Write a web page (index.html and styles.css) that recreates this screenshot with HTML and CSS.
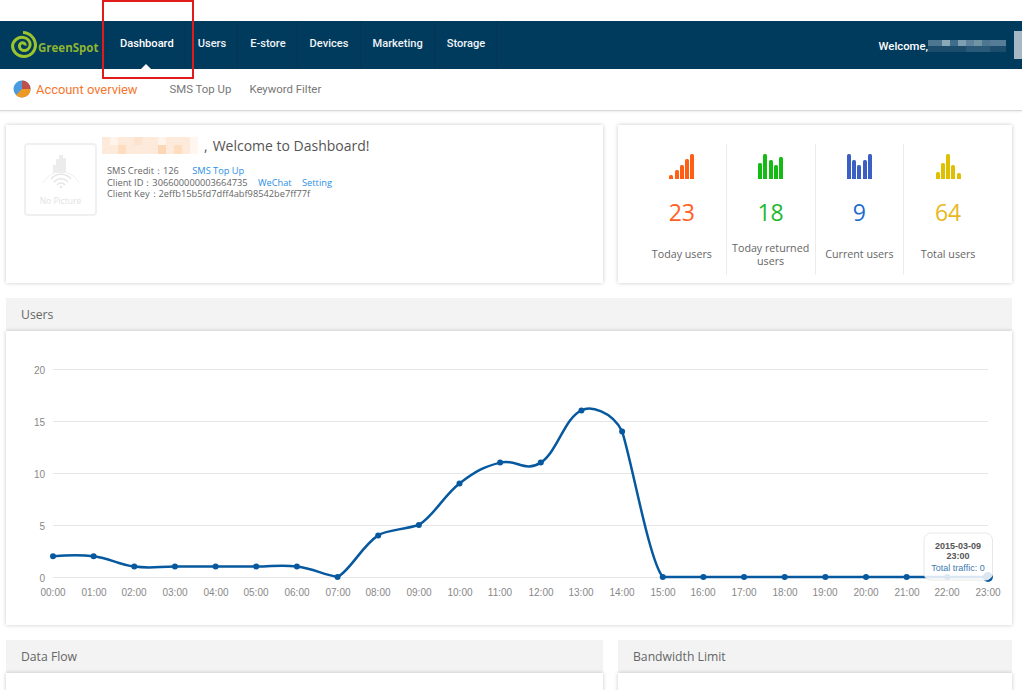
FILE: index.html
```html
<!DOCTYPE html>
<html lang="en">
<head>
    <meta charset="UTF-8">
    <meta name="viewport" content="width=device-width, initial-scale=1.0">
    <title>Dashboard</title>
    <link rel="stylesheet" href="styles.css">
</head>
<body>
    <div class="red-mark"></div>

    <header class="navbar">
        <a class="logo">
            <svg width="26" height="28" viewBox="0 0 26 28">
                <path d="M12 1.500A13 13 0 0 1 24.500 14.500A11.500 11.500 0 0 1 12.500 25.500A11 11 0 0 1 1.500 14.500A9.500 9.500 0 0 1 12.500 6.500A7 7 0 0 1 19 14.500A6 6 0 0 1 12.500 19.500A4.500 4.500 0 0 1 8.500 14.500A3 3 0 0 1 12.500 12A2 2 0 0 1 14 14.500" fill="none" stroke="#9cc42c" stroke-width="3"/>
            </svg>
            <span>GreenSpot</span>
        </a>
        <nav class="main-nav">
            <a class="active">Dashboard</a>
            <a>Users</a>
            <a>E-store</a>
            <a>Devices</a>
            <a>Marketing</a>
            <a>Storage</a>
        </nav>
        <div class="welcome">
            <span>Welcome,</span>
            <svg width="78" height="12" viewBox="0 0 78 12">
                <rect width="78" height="12" fill="#1d4d6d"/>
                <rect x="0" width="14" height="6" fill="#4d7691"/>
                <rect x="14" width="8" height="6" fill="#8aa9b8"/>
                <rect x="22" width="8" height="6" fill="#3f6c88"/>
                <rect x="30" width="8" height="6" fill="#7e9fb2"/>
                <rect x="38" width="8" height="6" fill="#5f839d"/>
                <rect x="46" width="8" height="6" fill="#6f95a5"/>
                <rect x="54" width="8" height="6" fill="#4d7691"/>
                <rect x="62" width="16" height="6" fill="#567c98"/>
                <rect x="38" y="6" width="24" height="6" fill="#2b5a78"/>
            </svg>
            <div class="welcome-edge"></div>
        </div>
    </header>

    <div class="subnav">
        <svg width="18" height="18" viewBox="0 0 18 18">
            <circle cx="9" cy="9" r="8.500" fill="#4b9be0"/>
            <path d="M9 9V.5A8.500 8.500 0 0 1 17.500 9z" fill="#c0504a"/>
            <path d="M9 9h8.500A8.500 8.500 0 0 1 3 15z" fill="#ee9a22"/>
        </svg>
        <a class="current">Account overview</a>
        <a class="sub-first">SMS Top Up</a>
        <a>Keyword Filter</a>
    </div>

    <main class="content">
        <section class="card account">
            <div class="no-picture">
                <svg width="40" height="34" viewBox="0 0 40 34">
                    <path d="M12 18V10h3V4h3V0h4v3h3v15z" fill="#ececec"/>
                    <path d="M2 28A20 20 0 0 1 38 28" fill="none" stroke="#f0f0f0"/>
                    <path d="M10 24A13 13 0 0 1 30 24M13 27A9 9 0 0 1 27 27M16 30A5 5 0 0 1 24 30" fill="none" stroke="#e6e6e6" stroke-width="1.500"/>
                    <circle cx="20" cy="32" r="1.200" fill="#e6e6e6"/>
                </svg>
                <span>No Picture</span>
            </div>
            <div class="account-info">
                <h2>
                    <svg width="96" height="17" viewBox="0 0 96 17">
                        <rect width="96" height="17" fill="#fdeadb"/>
                        <rect x="8" width="8" height="8" fill="#fff3ea"/>
                        <rect x="16" y="8" width="8" height="9" fill="#fddcc0"/>
                        <rect x="32" width="8" height="8" fill="#fde3cd"/>
                        <rect x="56" width="8" height="8" fill="#fff3ea"/>
                        <rect x="56" y="8" width="8" height="9" fill="#fdd6b5"/>
                        <rect x="72" y="8" width="8" height="9" fill="#fddcc0"/>
                        <rect x="88" width="8" height="17" fill="#fff6f0"/>
                    </svg>
                    <span class="comma">,</span>
                    <span>Welcome to Dashboard!</span>
                </h2>
                <p>SMS Credit：126 <a class="link-first">SMS Top Up</a></p>
                <p>Client ID：306600000003664735 <a class="link-next">WeChat</a> <a class="link-next">Setting</a></p>
                <p>Client Key：2effb15b5fd7dff4abf98542be7ff77f</p>
            </div>
        </section>

        <section class="card stats">
            <div class="stat stat-orange">
                <div class="bars">
                    <i class="bar-4"></i><i class="bar-9"></i><i class="bar-14"></i><i class="bar-20"></i><i class="bar-25"></i>
                </div>
                <div class="num">23</div>
                <div class="label">Today users</div>
            </div>
            <div class="stat stat-green">
                <div class="bars">
                    <i class="bar-16"></i><i class="bar-25"></i><i class="bar-19"></i><i class="bar-14"></i><i class="bar-22"></i>
                </div>
                <div class="num">18</div>
                <div class="label">Today returned users</div>
            </div>
            <div class="stat stat-blue">
                <div class="bars">
                    <i class="bar-25"></i><i class="bar-19"></i><i class="bar-14"></i><i class="bar-19"></i><i class="bar-25"></i>
                </div>
                <div class="num">9</div>
                <div class="label">Current users</div>
            </div>
            <div class="stat stat-yellow">
                <div class="bars">
                    <i class="bar-7"></i><i class="bar-16"></i><i class="bar-25"></i><i class="bar-14"></i><i class="bar-6"></i>
                </div>
                <div class="num">64</div>
                <div class="label">Total users</div>
            </div>
        </section>

        <section class="panel panel-wide">
            <div class="panel-head">Users</div>
            <div class="panel-body chart-body">
                <svg class="chart" width="1006" height="294" viewBox="6 331 1006 294">
                    <g class="grid">
                        <path d="M53 369.500H988M53 421.500H988M53 473.500H988M53 525.500H988"/>
                        <path class="base" d="M53 577.500H988"/>
                    </g>
                    <g class="y-labels">
                        <text x="45" y="374">20</text>
                        <text x="45" y="426">15</text>
                        <text x="45" y="478">10</text>
                        <text x="45" y="530">5</text>
                        <text x="45" y="582">0</text>
                    </g>
                    <g class="x-labels">
                        <text x="53" y="596">00:00</text>
                        <text x="94" y="596">01:00</text>
                        <text x="134" y="596">02:00</text>
                        <text x="175" y="596">03:00</text>
                        <text x="216" y="596">04:00</text>
                        <text x="256" y="596">05:00</text>
                        <text x="297" y="596">06:00</text>
                        <text x="338" y="596">07:00</text>
                        <text x="378" y="596">08:00</text>
                        <text x="419" y="596">09:00</text>
                        <text x="460" y="596">10:00</text>
                        <text x="500" y="596">11:00</text>
                        <text x="541" y="596">12:00</text>
                        <text x="581" y="596">13:00</text>
                        <text x="622" y="596">14:00</text>
                        <text x="663" y="596">15:00</text>
                        <text x="703" y="596">16:00</text>
                        <text x="744" y="596">17:00</text>
                        <text x="785" y="596">18:00</text>
                        <text x="825" y="596">19:00</text>
                        <text x="866" y="596">20:00</text>
                        <text x="907" y="596">21:00</text>
                        <text x="947" y="596">22:00</text>
                        <text x="988" y="596">23:00</text>
                    </g>
                    <path class="line" d="M53 556.200C53 556.200 77.390 554.120 93.650 556.200C109.910 558.280 118.040 564.520 134.300 566.600C150.560 568.680 158.690 566.600 174.950 566.600C191.210 566.600 199.340 566.600 215.600 566.600C231.860 566.600 239.990 566.600 256.250 566.600C272.510 566.600 280.640 564.520 296.900 566.600C313 568.700 322 574 337.550 577C350 570.760 362 545.800 378.200 535.400C386 530 402 530 418.850 525C435.110 514.600 443.240 495.880 459.500 483.400C475.760 470.920 483.890 466.760 500.150 462.600C516.410 458.440 524.540 473 540.800 462.600C557.060 452.200 565.190 416.840 581.450 410.600C590 405.500 612 411 622.100 431.400C632 462 649 560 662.750 577L988 577"/>
                    <g class="points">
                        <circle cx="53" cy="556.200" r="3"/><circle cx="93.650" cy="556.200" r="3"/>
                        <circle cx="134.300" cy="566.600" r="3"/><circle cx="174.950" cy="566.600" r="3"/>
                        <circle cx="215.600" cy="566.600" r="3"/><circle cx="256.250" cy="566.600" r="3"/>
                        <circle cx="296.900" cy="566.600" r="3"/><circle cx="337.550" cy="577" r="3"/>
                        <circle cx="378.200" cy="535.400" r="3"/><circle cx="418.850" cy="525" r="3"/>
                        <circle cx="459.500" cy="483.400" r="3"/><circle cx="500.150" cy="462.600" r="3"/>
                        <circle cx="540.800" cy="462.600" r="3"/><circle cx="581.450" cy="410.600" r="3"/>
                        <circle cx="622.100" cy="431.400" r="3"/><circle cx="662.750" cy="577" r="3"/>
                        <circle cx="703.400" cy="577" r="3"/><circle cx="744.050" cy="577" r="3"/>
                        <circle cx="784.700" cy="577" r="3"/><circle cx="825.350" cy="577" r="3"/>
                        <circle cx="866" cy="577" r="3"/><circle cx="906.650" cy="577" r="3"/>
                        <circle cx="947.300" cy="577" r="3"/><circle cx="987.950" cy="577" r="5"/>
                    </g>
                    <g class="tooltip">
                        <rect x="924" y="533" width="68.500" height="47" rx="7"/>
                        <text class="tip-date" x="958" y="549">2015-03-09</text>
                        <text class="tip-date" x="958" y="559">23:00</text>
                        <text class="tip-value" x="958" y="571">Total traffic: 0</text>
                    </g>
                </svg>
            </div>
        </section>

        <section class="panel">
            <div class="panel-head">Data Flow</div>
            <div class="panel-body cut-body"><span class="cut-text">8,000 MB</span></div>
        </section>
        <section class="panel">
            <div class="panel-head">Bandwidth Limit</div>
            <div class="panel-body cut-body"></div>
        </section>
    </main>
</body>
</html>
```

FILE: styles.css
```css
html, body {
    height: 690px;
    overflow: hidden;
}

body {
    font-family: "Open Sans", "Noto Sans", sans-serif;
    margin: 0;
    padding: 21px 0 0;
    box-sizing: border-box;
    background-color: #fff;
    color: #666;
    position: relative;
}

.red-mark {
    position: absolute;
    left: 102px;
    top: 0;
    width: 88px;
    height: 75px;
    border: 2px solid #e11a1a;
    z-index: 5;
}

.navbar {
    height: 48px;
    background-color: #003a5c;
    display: flex;
    align-items: center;
    font-family: Roboto, "Open Sans", sans-serif;
}

.logo {
    width: 107px;
    display: flex;
    align-items: center;
    padding-left: 11px;
    box-sizing: border-box;
    color: #8fb531;
    font-family: "Open Sans", sans-serif;
    font-size: 11.500px;
    font-weight: 700;
}

.logo span {
    margin: 4px 0 0 1px;
}

.main-nav {
    display: flex;
    height: 100%;
    border-left: 1px solid #043452;
}

.main-nav a {
    display: flex;
    align-items: center;
    padding: 0 11px 3px 12px;
    color: #eef4f8;
    font-size: 11.100px;
    font-weight: 500;
    border-right: 1px solid #043452;
    position: relative;
}

.main-nav .active {
    color: #fff;
}

.main-nav .active::after {
    content: "";
    position: absolute;
    left: 50%;
    bottom: 0;
    margin-left: -5px;
    border: 5px solid transparent;
    border-top: 0;
    border-bottom-color: #fff;
}

.welcome {
    margin-left: auto;
    display: flex;
    align-items: center;
    height: 100%;
    color: #fff;
    font-size: 11.300px;
    font-weight: 500;
}

.welcome span {
    margin-top: 3px;
}

.welcome svg {
    margin-top: 2px;
}

.welcome-edge {
    width: 8px;
    height: 28px;
    margin-left: 8px;
    background-color: #a5b8c4;
}

.subnav {
    height: 42px;
    display: flex;
    align-items: center;
    padding: 0 0 1px 13px;
    font-family: Roboto, "Open Sans", sans-serif;
    font-size: 11.400px;
    color: #777;
    border-bottom: 1px solid #d8d8d8;
    box-shadow: 0 1px 2px rgba(0, 0, 0, 0.08);
    box-sizing: border-box;
}

.subnav a {
    margin-right: 18px;
}

.subnav .current {
    margin-left: 5px;
    margin-right: 0;
    color: #f5762e;
    font-size: 12.900px;
}

.subnav .sub-first {
    margin-left: 32px;
}

.content {
    display: grid;
    grid-template-columns: 597px 394px;
    column-gap: 15px;
    row-gap: 15px;
    padding: 14px 0 0 6px;
}

.card {
    height: 158px;
    background-color: #fff;
    box-shadow: 0 0 4px rgba(0, 0, 0, 0.22);
    box-sizing: border-box;
}

.account {
    display: flex;
    padding: 12px 0 0 18px;
}

.no-picture {
    width: 73px;
    height: 73px;
    margin-top: 6px;
    border: 2px solid #f0f0f0;
    border-radius: 4px;
    box-sizing: border-box;
    display: flex;
    flex-direction: column;
    align-items: center;
    padding-top: 10px;
    font-size: 8.500px;
    color: #e2e2e2;
}

.no-picture span {
    margin-top: 6px;
}

.account-info {
    margin-left: 10px;
    font-size: 9.250px;
    line-height: 11.500px;
}

.account-info h2 {
    display: flex;
    align-items: center;
    margin: 0 0 11px -5px;
    height: 17px;
    font-size: 14px;
    font-weight: 400;
    color: #555;
}

.account-info .comma {
    margin: 0 5px 0 6px;
}

.account-info p {
    margin: 0;
}

.account-info a {
    color: #2b8fe6;
}

.link-first {
    margin-left: 11px;
}

.link-next {
    margin-left: 8px;
}

.stats {
    display: flex;
    padding: 19px 20px 8px 20px;
}

.stat {
    flex: 1;
    display: flex;
    flex-direction: column;
    align-items: center;
    text-align: center;
    padding-top: 10px;
    border-right: 1px solid #ececec;
}

.stat:last-child {
    border-right: 0;
}

.bars {
    display: flex;
    align-items: flex-end;
    gap: 1.300px;
    height: 25px;
}

.bars i {
    display: block;
    width: 4px;
    border-radius: 1.500px 1.500px 0 0;
}

.bar-4 { height: 4px; }
.bar-6 { height: 6px; }
.bar-7 { height: 7px; }
.bar-9 { height: 9px; }
.bar-14 { height: 14px; }
.bar-16 { height: 16px; }
.bar-19 { height: 19px; }
.bar-20 { height: 20px; }
.bar-22 { height: 22px; }
.bar-25 { height: 25px; }

.stat-orange .bars i { background-color: #ff5f14; }
.stat-green .bars i { background-color: #14bb14; }
.stat-blue .bars i { background-color: #3c5fc4; }
.stat-yellow .bars i { background-color: #dfc000; }

.num {
    margin-top: 18px;
    font-size: 23px;
    line-height: 30px;
}

.stat-orange .num { color: #ff5f22; }
.stat-green .num { color: #1cb92e; }
.stat-blue .num { color: #1c6ccc; }
.stat-yellow .num { color: #e8b820; }

.label {
    flex: 1;
    display: flex;
    align-items: center;
    justify-content: center;
    padding-top: 7px;
    font-size: 10.700px;
    line-height: 13px;
}

.panel-wide {
    grid-column: 1 / 3;
}

.panel-head {
    height: 33px;
    line-height: 33px;
    padding-left: 15px;
    background-color: #f3f3f3;
    font-size: 12.200px;
    color: #666;
}

.panel-body {
    background-color: #fff;
    box-shadow: 0 0 4px rgba(0, 0, 0, 0.22);
}

.chart-body {
    height: 294px;
}

.chart {
    display: block;
    font-family: "Liberation Sans", Arial, sans-serif;
}

.grid path {
    fill: none;
    stroke: #e6e6e6;
    stroke-width: 1;
}

.y-labels text {
    font-size: 10px;
    fill: #888;
    text-anchor: end;
}

.x-labels text {
    font-size: 10px;
    fill: #888;
    text-anchor: middle;
}

.line {
    fill: none;
    stroke: #07599f;
    stroke-width: 2.500;
}

.points circle {
    fill: #07599f;
}

.tooltip rect {
    fill: rgba(255, 255, 255, 0.85);
    stroke: #e8e8e8;
}

.tooltip text {
    text-anchor: middle;
}

.tip-date {
    font-size: 9px;
    font-weight: 700;
    fill: #555;
}

.tip-value {
    font-size: 9px;
    fill: #3d7ab0;
}

.cut-body {
    height: 60px;
    padding: 9px 0 0 9px;
    box-sizing: border-box;
}

.cut-text {
    font-family: "Liberation Sans", Arial, sans-serif;
    font-size: 9px;
    color: #888;
}
```
